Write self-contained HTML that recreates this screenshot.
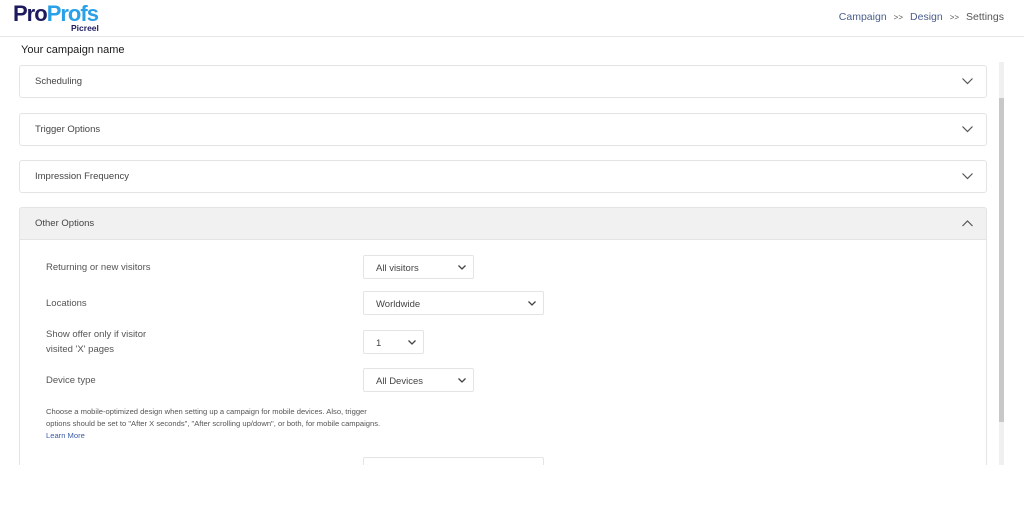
<!DOCTYPE html>
<html><head><meta charset="utf-8"><style>
*{box-sizing:border-box;margin:0;padding:0}
body{width:1024px;height:529px;background:#fff;font-family:"Liberation Sans",Arial,sans-serif;position:relative;overflow:hidden;color:#444}
.hdr{position:absolute;left:0;top:0;width:1024px;height:37px;border-bottom:1px solid #e6e6e6;background:#fff}
.logo{position:absolute;left:13px;top:2px;font-weight:bold;font-size:22px;letter-spacing:-1px;line-height:24px}
.logo .a{color:#1d1a5e}.logo .b{color:#2aa0e8}
.pic{position:absolute;left:71px;top:23px;font-size:8.5px;font-weight:bold;color:#1d1a5e}
.nav{position:absolute;right:20px;top:11px;font-size:10.5px;color:#4a5d8c}
.nav .s{color:#555;font-size:8px;margin:0 7px}
.nav .g{color:#555}
.title{position:absolute;left:21px;top:44px;font-size:11px;color:#1a1a1a}
.panel{position:absolute;left:19px;width:968px;height:33px;border:1px solid #e4e4e4;border-radius:3px;background:#fff}
.panel span{position:absolute;left:15px;top:10px;font-size:9.5px;color:#444}
.chev{position:absolute;right:13px;top:12px}
.scroll{position:absolute;left:999px;top:62px;width:5px;height:403px;background:#f0f0f0}
.thumb{position:absolute;left:999px;top:98px;width:5px;height:324px;background:#c8c8c8}
.body{position:absolute;left:19px;top:240px;width:968px;height:225px;border-left:1px solid #e4e4e4;border-right:1px solid #e4e4e4}
.lbl{position:absolute;left:46px;font-size:9.5px;color:#555;line-height:15px}
.sel{position:absolute;left:363px;height:24px;border:1px solid #e4e4e4;border-radius:2px;font-size:9.5px;color:#444;padding:7px 0 0 12px;background:#fff}
.sel svg{position:absolute;right:7px;top:9px}
.note{position:absolute;left:46px;top:406px;font-size:7.6px;color:#555;line-height:12px}
.note a{color:#3a5ca8;text-decoration:none}
</style></head><body>
<div class="hdr">
<div class="logo"><span class="a">Pro</span><span class="b">Profs</span></div>
<div class="pic">Picreel</div>
<div class="nav">Campaign<span class="s">&gt;&gt;</span>Design<span class="s">&gt;&gt;</span><span class="g">Settings</span></div>
</div>
<div class="title">Your campaign name</div>
<div class="panel" style="top:65px"><span>Scheduling</span><svg class="chev" width="11" height="7" viewBox="0 0 11 7"><path d="M0.5 0.5L5.5 5.5L10.5 0.5" fill="none" stroke="#555" stroke-width="1.2"/></svg></div>
<div class="panel" style="top:113px"><span>Trigger Options</span><svg class="chev" width="11" height="7" viewBox="0 0 11 7"><path d="M0.5 0.5L5.5 5.5L10.5 0.5" fill="none" stroke="#555" stroke-width="1.2"/></svg></div>
<div class="panel" style="top:160px"><span>Impression Frequency</span><svg class="chev" width="11" height="7" viewBox="0 0 11 7"><path d="M0.5 0.5L5.5 5.5L10.5 0.5" fill="none" stroke="#555" stroke-width="1.2"/></svg></div>
<div class="panel" style="top:207px;background:#f1f1f1;border-radius:3px 3px 0 0"><span>Other Options</span><svg class="chev" width="11" height="7" viewBox="0 0 11 7"><path d="M0.5 6L5.5 1L10.5 6" fill="none" stroke="#555" stroke-width="1.2"/></svg></div>
<div class="body"></div>
<div class="scroll"></div><div class="thumb"></div>
<div class="lbl" style="top:260px">Returning or new visitors</div>
<div class="sel" style="top:255px;width:111px">All visitors<svg width="8" height="5" viewBox="0 0 8 5"><path d="M0.5 0.5L4 4L7.5 0.5" fill="none" stroke="#444" stroke-width="1.3"/></svg></div>
<div class="lbl" style="top:296px">Locations</div>
<div class="sel" style="top:291px;width:181px">Worldwide<svg width="8" height="5" viewBox="0 0 8 5"><path d="M0.5 0.5L4 4L7.5 0.5" fill="none" stroke="#444" stroke-width="1.3"/></svg></div>
<div class="lbl" style="top:327px">Show offer only if visitor<br>visited 'X' pages</div>
<div class="sel" style="top:330px;width:61px">1<svg width="8" height="5" viewBox="0 0 8 5"><path d="M0.5 0.5L4 4L7.5 0.5" fill="none" stroke="#444" stroke-width="1.3"/></svg></div>
<div class="lbl" style="top:373px">Device type</div>
<div class="sel" style="top:368px;width:111px">All Devices<svg width="8" height="5" viewBox="0 0 8 5"><path d="M0.5 0.5L4 4L7.5 0.5" fill="none" stroke="#444" stroke-width="1.3"/></svg></div>
<div class="note">Choose a mobile-optimized design when setting up a campaign for mobile devices. Also, trigger<br>options should be set to "After X seconds", "After scrolling up/down", or both, for mobile campaigns.<br><a>Learn More</a></div>
<div style="position:absolute;left:363px;top:457px;width:181px;height:8px;border:1px solid #e4e4e4;border-bottom:none;border-radius:2px 2px 0 0"></div>
</body></html>
